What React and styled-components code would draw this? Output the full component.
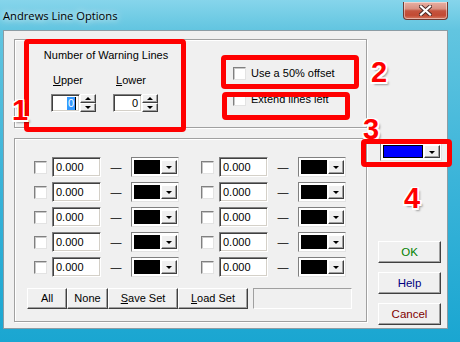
import React from "react";
import styled, { createGlobalStyle } from "styled-components";

const GlobalStyle = createGlobalStyle`
  html, body {
    margin: 0;
    padding: 0;
    background: #1ba7d2;
  }
  * {
    box-sizing: border-box;
  }
`;

const Window = styled.div`
  position: relative;
  width: 460px;
  height: 342px;
  display: flex;
  flex-direction: column;
  overflow: hidden;
  font-family: "Liberation Sans", Arial, sans-serif;
  font-size: 11px;
  color: #000;
  background: linear-gradient(180deg, #86d5eb 0px, #62c5e0 30px, #3bb4d9 180px, #1aa6d1 100%);
`;

const TitleBar = styled.div`
  height: 30px;
  display: flex;
  align-items: flex-start;
  padding-left: 3px;
`;

const Title = styled.div`
  padding-top: 7px;
  line-height: 18px;
  font-family: "Open Sans", "Noto Sans", sans-serif;
  font-size: 11.2px;
  color: #000;
  text-shadow: 0 0 6px rgba(255, 255, 255, 0.9), 0 0 10px rgba(255, 255, 255, 0.6);
`;

const CloseButton = styled.div`
  margin-left: auto;
  margin-right: 12px;
  margin-top: 2px;
  width: 45px;
  height: 18px;
  display: flex;
  align-items: center;
  justify-content: center;
  border: 1px solid #6e3a32;
  border-top: none;
  border-radius: 0 0 4px 4px;
  background: linear-gradient(180deg, #e7b0a3 0%, #d99182 40%, #c4553f 52%, #c24a33 78%, #d67a62 100%);
  box-shadow: inset 0 0 0 1px rgba(255, 255, 255, 0.45);
`;

const FrameBody = styled.div`
  flex: 1;
  display: flex;
  padding: 0 12px 13px 3px;
`;

const Client = styled.div`
  flex: 1;
  display: flex;
  background: #f0f0f0;
  border: 1px solid #8c9ca4;
`;

const LeftCol = styled.div`
  width: 353px;
  margin-left: 10px;
  padding-top: 8px;
  display: flex;
  flex-direction: column;
  gap: 10px;
`;

const GroupBox = styled.div`
  height: ${(p) => p.$h}px;
  border: 1px solid #a0a0a0;
  box-shadow: inset 1px 1px 0 #fff, 1px 1px 0 #fff;
  display: flex;
  flex-direction: ${(p) => (p.$column ? "column" : "row")};
  padding: ${(p) => p.$pad || 0};
`;

const WarnBlock = styled.div`
  width: 132px;
  margin-left: 25px;
  padding-top: 9px;
  display: flex;
  flex-direction: column;
`;

const Heading = styled.div`
  line-height: 13px;
  text-align: center;
  white-space: nowrap;
`;

const SpinRow = styled.div`
  display: flex;
  gap: 17px;
  padding-left: 11px;
  margin-top: 12px;
`;

const SpinField = styled.div`
  display: flex;
  flex-direction: column;
`;

const FieldLabel = styled.div`
  line-height: 13px;
  padding-left: ${(p) => p.$indent}px;
  margin-bottom: 7px;
  u {
    text-decoration: underline;
  }
`;

const Spinner = styled.div`
  display: flex;
  height: 18px;
`;

const SunkenBox = styled.div`
  width: ${(p) => p.$w}px;
  height: ${(p) => p.$h}px;
  margin-left: ${(p) => p.$gap || 0}px;
  background: #fff;
  border: 1px solid;
  border-color: #808080 #fff #fff #808080;
  box-shadow: inset 1px 1px 0 #404040, inset -1px -1px 0 #d4d0c8;
  display: flex;
  align-items: center;
  justify-content: ${(p) => (p.$right ? "flex-end" : "flex-start")};
  padding: 0 3px;
  line-height: 13px;
  white-space: nowrap;
`;

const Selected = styled.span`
  background: #3399ff;
  color: #fff;
  padding: 0 1px;
  border-right: 1px solid #000;
`;

const SpinButtons = styled.div`
  width: 16px;
  display: flex;
  flex-direction: column;
`;

const RaisedButton = styled.div`
  flex: 1;
  display: flex;
  align-items: center;
  justify-content: center;
  background: #f0f0f0;
  border: 1px solid;
  border-color: #fff #404040 #404040 #fff;
  box-shadow: inset -1px -1px 0 #a0a0a0;
`;

const Arrow = styled.span`
  width: 0;
  height: 0;
  border-left: ${(p) => p.$size}px solid transparent;
  border-right: ${(p) => p.$size}px solid transparent;
  ${(p) => (p.$up ? "border-bottom" : "border-top")}: ${(p) => p.$size}px solid #000;
`;

const OptionBlock = styled.div`
  margin-left: 61px;
  padding-top: 27px;
  display: flex;
  flex-direction: column;
  gap: 13px;
`;

const CheckRow = styled.label`
  display: flex;
  align-items: center;
  gap: 5px;
  line-height: 13px;
  white-space: nowrap;
`;

const CheckBox = styled.span`
  width: 13px;
  height: 13px;
  flex: none;
  background: #fff;
  border: 1px solid;
  border-color: #808080 #e3e3e3 #e3e3e3 #808080;
  box-shadow: inset 1px 1px 0 #c8c8c8;
`;

const LinesGrid = styled.div`
  display: flex;
  flex-direction: column;
  gap: 5px;
  padding-left: 19px;
`;

const LineRow = styled.div`
  display: flex;
  gap: 22px;
`;

const LineCell = styled.div`
  display: flex;
  align-items: center;
  height: 20px;
`;

const Dash = styled.span`
  width: 30px;
  text-align: center;
`;

const ColorCombo = styled.div`
  width: ${(p) => p.$w}px;
  height: ${(p) => p.$h}px;
  display: flex;
  align-items: stretch;
  padding: 2px 1px 2px 2px;
  background: #fff;
  border: 1px solid;
  border-color: #808080 #e3e3e3 #e3e3e3 #808080;
  gap: 1px;
`;

const Swatch = styled.span`
  flex: 1;
  background: ${(p) => p.$color};
  border: 1px solid #000;
`;

const ComboButton = styled(RaisedButton)`
  flex: none;
  width: 16px;
  padding-top: 1px;
`;

const ButtonRow = styled.div`
  display: flex;
  align-items: stretch;
  height: 21px;
  margin-top: 11px;
  padding-left: 12px;
`;

const PushButton = styled.div`
  width: ${(p) => p.$w}px;
  display: flex;
  align-items: center;
  justify-content: center;
  color: ${(p) => p.$color || "#000"};
  background: #f0f0f0;
  border: 1px solid;
  border-color: #fff #404040 #404040 #fff;
  box-shadow: inset -1px -1px 0 #a0a0a0;
  line-height: 13px;
  white-space: nowrap;
`;

const StatusField = styled.div`
  width: 99px;
  margin-left: 5px;
  border: 1px solid;
  border-color: #a0a0a0 #fff #fff #a0a0a0;
`;

const RightCol = styled.div`
  width: 64px;
  margin-left: 11px;
  padding-top: 111px;
  display: flex;
  flex-direction: column;
`;

const ComboSlot = styled.div`
  padding-left: 2px;
  margin-bottom: 80px;
`;

const DialogButtons = styled.div`
  display: flex;
  flex-direction: column;
  gap: 9px;
`;

const DialogButton = styled(PushButton)`
  height: 22px;
  font-size: 11.5px;
`;

const RedBox = styled.div`
  position: absolute;
  left: ${(p) => p.$x}px;
  top: ${(p) => p.$y}px;
  width: ${(p) => p.$w}px;
  height: ${(p) => p.$h}px;
  border: 5px solid #ff0000;
  border-radius: 4px;
  pointer-events: none;
`;

const Marker = styled.div`
  position: absolute;
  left: ${(p) => p.$x}px;
  top: ${(p) => p.$y}px;
  font-family: "Liberation Sans", Arial, sans-serif;
  font-weight: bold;
  font-size: 29px;
  line-height: 29px;
  color: #ff0000;
  text-shadow: -1.5px -1.5px 0 #fff, 1.5px -1.5px 0 #fff, -1.5px 1.5px 0 #fff, 1.5px 1.5px 0 #fff,
    0 -1.5px 0 #fff, 0 1.5px 0 #fff, -1.5px 0 0 #fff, 1.5px 0 0 #fff, 2.5px 2.5px 2px rgba(0, 0, 0, 0.35);
`;

const CloseGlyph = () => (
  <svg width="13" height="11" viewBox="0 0 13 11">
    <path
      d="M2 1.5 L11 9.5 M11 1.5 L2 9.5"
      stroke="#4a2a26"
      strokeWidth="4"
      strokeLinecap="square"
      fill="none"
    />
    <path
      d="M2 1.5 L11 9.5 M11 1.5 L2 9.5"
      stroke="#fff"
      strokeWidth="2.2"
      strokeLinecap="square"
      fill="none"
    />
  </svg>
);

const Spin = ({ children }) => (
  <Spinner>
    <SunkenBox $w={29} $h={18} $right>
      {children}
    </SunkenBox>
    <SpinButtons>
      <RaisedButton>
        <Arrow $up $size={3} />
      </RaisedButton>
      <RaisedButton>
        <Arrow $size={3} />
      </RaisedButton>
    </SpinButtons>
  </Spinner>
);

const Combo = ({ color, w = 48, h = 20 }) => (
  <ColorCombo $w={w} $h={h}>
    <Swatch $color={color} />
    <ComboButton>
      <Arrow $size={3.5} />
    </ComboButton>
  </ColorCombo>
);

const Line = () => (
  <LineCell>
    <CheckBox />
    <SunkenBox $w={49} $h={20} $gap={5}>
      0.000
    </SunkenBox>
    <Dash>—</Dash>
    <Combo color="#000" />
  </LineCell>
);

const rows = [0, 1, 2, 3, 4];

export default function App() {
  return (
    <>
      <GlobalStyle />
      <Window>
        <TitleBar>
          <Title>Andrews Line Options</Title>
          <CloseButton>
            <CloseGlyph />
          </CloseButton>
        </TitleBar>
        <FrameBody>
          <Client>
            <LeftCol>
              <GroupBox $h={89}>
                <WarnBlock>
                  <Heading>Number of Warning Lines</Heading>
                  <SpinRow>
                    <SpinField>
                      <FieldLabel $indent={2}>
                        <u>U</u>pper
                      </FieldLabel>
                      <Spin>
                        <Selected>0</Selected>
                      </Spin>
                    </SpinField>
                    <SpinField>
                      <FieldLabel $indent={3}>
                        <u>L</u>ower
                      </FieldLabel>
                      <Spin>0</Spin>
                    </SpinField>
                  </SpinRow>
                </WarnBlock>
                <OptionBlock>
                  <CheckRow>
                    <CheckBox />
                    Use a 50% offset
                  </CheckRow>
                  <CheckRow>
                    <CheckBox />
                    Extend lines left
                  </CheckRow>
                </OptionBlock>
              </GroupBox>
              <GroupBox $h={184} $column $pad="18px 0 0 0">
                <LinesGrid>
                  {rows.map((r) => (
                    <LineRow key={r}>
                      <Line />
                      <Line />
                    </LineRow>
                  ))}
                </LinesGrid>
                <ButtonRow>
                  <PushButton $w={40}>All</PushButton>
                  <PushButton $w={41}>None</PushButton>
                  <PushButton $w={70}>
                    <span>
                      <u>S</u>ave Set
                    </span>
                  </PushButton>
                  <PushButton $w={70}>
                    <span>
                      <u>L</u>oad Set
                    </span>
                  </PushButton>
                  <StatusField />
                </ButtonRow>
              </GroupBox>
            </LeftCol>
            <RightCol>
              <ComboSlot>
                <Combo color="#0000ff" w={62} h={19} />
              </ComboSlot>
              <DialogButtons>
                <DialogButton $w={63} $color="#008000">
                  OK
                </DialogButton>
                <DialogButton $w={63} $color="#000080">
                  Help
                </DialogButton>
                <DialogButton $w={63} $color="#800000">
                  Cancel
                </DialogButton>
              </DialogButtons>
            </RightCol>
          </Client>
        </FrameBody>

        <RedBox $x={24} $y={39} $w={162} $h={93} />
        <RedBox $x={221} $y={55} $w={138} $h={34} />
        <RedBox $x={222} $y={92} $w={128} $h={28} />
        <Marker $x={363} $y={115}>3</Marker>
        <RedBox $x={361} $y={139} $w={91} $h={28} />
        <Marker $x={12} $y={96}>1</Marker>
        <Marker $x={371} $y={58}>2</Marker>
        <Marker $x={404} $y={184}>4</Marker>
      </Window>
    </>
  );
}
